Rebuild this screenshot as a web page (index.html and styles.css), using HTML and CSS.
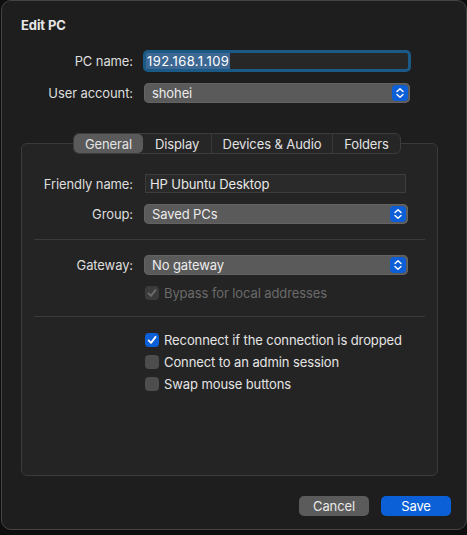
FILE: index.html
```html
<!DOCTYPE html>
<html lang="en">
<head>
    <meta charset="UTF-8">
    <meta name="viewport" content="width=device-width, initial-scale=1.0">
    <title>Edit PC</title>
    <link rel="stylesheet" href="styles.css">
</head>
<body>
    <div class="window">
        <h1 class="title">Edit PC</h1>

        <div class="form form-top">
            <label class="label">PC name:</label>
            <div class="field field-focus"><span class="selected">192.168.1.109</span></div>

            <label class="label">User account:</label>
            <div class="popup popup-wide">
                <span>shohei</span>
                <span class="stepper">
                    <svg viewBox="0 0 16 16" width="16" height="16"><path d="M5 6.6 L8 3.8 L11 6.6 M5 9.4 L8 12.2 L11 9.4" /></svg>
                </span>
            </div>
        </div>

        <div class="panel">
            <div class="tabs">
                <span class="tab tab-general active">General</span>
                <span class="tab tab-display">Display</span>
                <span class="tab tab-devices divided">Devices &amp; Audio</span>
                <span class="tab tab-folders divided">Folders</span>
            </div>

            <div class="form form-panel">
                <label class="label">Friendly name:</label>
                <div class="field field-plain">HP Ubuntu Desktop</div>

                <label class="label">Group:</label>
                <div class="popup">
                    <span>Saved PCs</span>
                    <span class="stepper">
                        <svg viewBox="0 0 16 16" width="16" height="16"><path d="M5 6.6 L8 3.8 L11 6.6 M5 9.4 L8 12.2 L11 9.4" /></svg>
                    </span>
                </div>
            </div>

            <div class="separator"></div>

            <div class="form form-panel form-gateway">
                <label class="label">Gateway:</label>
                <div class="popup">
                    <span>No gateway</span>
                    <span class="stepper">
                        <svg viewBox="0 0 16 16" width="16" height="16"><path d="M5 6.6 L8 3.8 L11 6.6 M5 9.4 L8 12.2 L11 9.4" /></svg>
                    </span>
                </div>
            </div>

            <div class="check-row disabled bypass">
                <span class="box checked">
                    <svg viewBox="0 0 14 14" width="14" height="14"><path d="M3.6 7.4 L6 9.9 L10.6 3.9" /></svg>
                </span>
                <span>Bypass for local addresses</span>
            </div>

            <div class="separator separator-low"></div>

            <div class="checks">
                <div class="check-row">
                    <span class="box checked">
                        <svg viewBox="0 0 14 14" width="14" height="14"><path d="M3.6 7.4 L6 9.9 L10.6 3.9" /></svg>
                    </span>
                    <span>Reconnect if the connection is dropped</span>
                </div>
                <div class="check-row">
                    <span class="box"></span>
                    <span>Connect to an admin session</span>
                </div>
                <div class="check-row">
                    <span class="box"></span>
                    <span>Swap mouse buttons</span>
                </div>
            </div>
        </div>

        <div class="actions">
            <button class="button">Cancel</button>
            <button class="button button-primary">Save</button>
        </div>
    </div>
</body>
</html>
```

FILE: styles.css
```css
body {
    margin: 0;
    background-color: #0e0e0e;
    font-family: "Inter", "Noto Sans", sans-serif;
    font-size: 13px;
    letter-spacing: -0.1px;
    color: #dedede;
}

.window {
    box-sizing: border-box;
    width: 466px;
    height: 530px;
    margin-left: 1px;
    padding: 16px 0 0 19px;
    background-color: #1e1e1e;
    border: 1px solid #444;
    border-radius: 10px;
}

.title {
    margin: 0;
    font-size: 13px;
    line-height: 16px;
    font-weight: 700;
    color: #e6e6e6;
}

/* label / control grids */
.form {
    display: grid;
    align-items: center;
}

.form-top {
    grid-template-columns: 112px 268px;
    column-gap: 10px;
    row-gap: 11px;
    margin-top: 17px;
}

.form-panel {
    grid-template-columns: 99px 264px;
    column-gap: 11px;
    row-gap: 11px;
    margin-top: 20px;
}

.label {
    text-align: right;
    line-height: 16px;
}

.field {
    box-sizing: border-box;
    display: flex;
    align-items: center;
    background-color: #272727;
}

.field-focus {
    height: 22px;
    padding-left: 0;
    border: 3px solid #1b5a87;
    border-radius: 5px;
}

.selected {
    background-color: #3d6893;
    color: #fff;
    line-height: 16px;
    padding: 0 1px;
    letter-spacing: 0.4px;
}

.field-plain {
    width: 261px;
    height: 19px;
    margin-left: 1px;
    padding-left: 4px;
    background-color: #2a2a2a;
    border: 1px solid #3d3d3d;
    color: #e8e8e8;
}

.popup {
    box-sizing: border-box;
    display: flex;
    align-items: center;
    justify-content: space-between;
    height: 20px;
    padding: 0 2px 0 8px;
    background-color: #5a5a5a;
    border-radius: 5px;
    box-shadow: inset 0 0 0 1px #636363;
    color: #ececec;
}

.popup-wide {
    margin: 0 1px;
}

.stepper {
    display: flex;
    width: 16px;
    height: 16px;
    background-color: #0c5fd6;
    border-radius: 4px;
}

.stepper svg path {
    fill: none;
    stroke: #fff;
    stroke-width: 1.4;
    stroke-linecap: round;
    stroke-linejoin: round;
}

/* tab group box */
.panel {
    box-sizing: border-box;
    width: 417px;
    height: 333px;
    margin-top: 40px;
    padding: 0 12px;
    background-color: #242424;
    border: 1px solid #3a3a3a;
    border-radius: 6px;
}

.tabs {
    box-sizing: border-box;
    display: flex;
    width: 328px;
    height: 21px;
    margin: -11px 0 0 39px;
    background-color: #262626;
    border: 1px solid #3c3c3c;
    border-radius: 6px;
}

.tab {
    box-sizing: border-box;
    display: flex;
    align-items: center;
    justify-content: center;
    height: 19px;
    color: #e2e2e2;
}

.tab.active {
    background-color: #5a5a5a;
    border-radius: 5px;
}

.tab.divided {
    border-left: 1px solid #3a3a3a;
}

.tab-general { width: 69px; }
.tab-display { width: 68px; }
.tab-devices { width: 121px; }
.tab-folders { width: 68px; }

.separator {
    height: 1px;
    margin-top: 15px;
    background-color: #3a3a3a;
}

.separator-low {
    margin-top: 16px;
}

.form-gateway {
    margin-top: 15px;
}

/* checkboxes */
.check-row {
    display: flex;
    align-items: center;
    gap: 5px;
    height: 22px;
    padding-left: 111px;
    color: #e4e4e4;
}

.bypass {
    height: 14px;
    margin-top: 11px;
}

.checks {
    margin-top: 12px;
}

.box {
    box-sizing: border-box;
    display: flex;
    width: 14px;
    height: 14px;
    background-color: #4d4d4d;
    border-radius: 4px;
}

.box.checked {
    background-color: #0c5fd6;
}

.box svg path {
    fill: none;
    stroke: #fff;
    stroke-width: 1.8;
    stroke-linecap: round;
    stroke-linejoin: round;
}

.check-row.disabled {
    color: #6a6a6a;
}

.check-row.disabled .box {
    background-color: #3b3b3b;
}

.check-row.disabled .box svg path {
    stroke: #6c6c6c;
}

/* footer buttons */
.actions {
    display: flex;
    justify-content: flex-end;
    gap: 12px;
    margin-top: 20px;
    padding-right: 15px;
}

.button {
    width: 70px;
    height: 20px;
    padding: 0;
    border: none;
    border-radius: 5px;
    background-color: #5b5b5b;
    color: #e8e8e8;
    font-family: inherit;
    font-size: 13px;
    letter-spacing: inherit;
}

.button-primary {
    background-color: #0b5fd7;
    color: #fff;
}
```
